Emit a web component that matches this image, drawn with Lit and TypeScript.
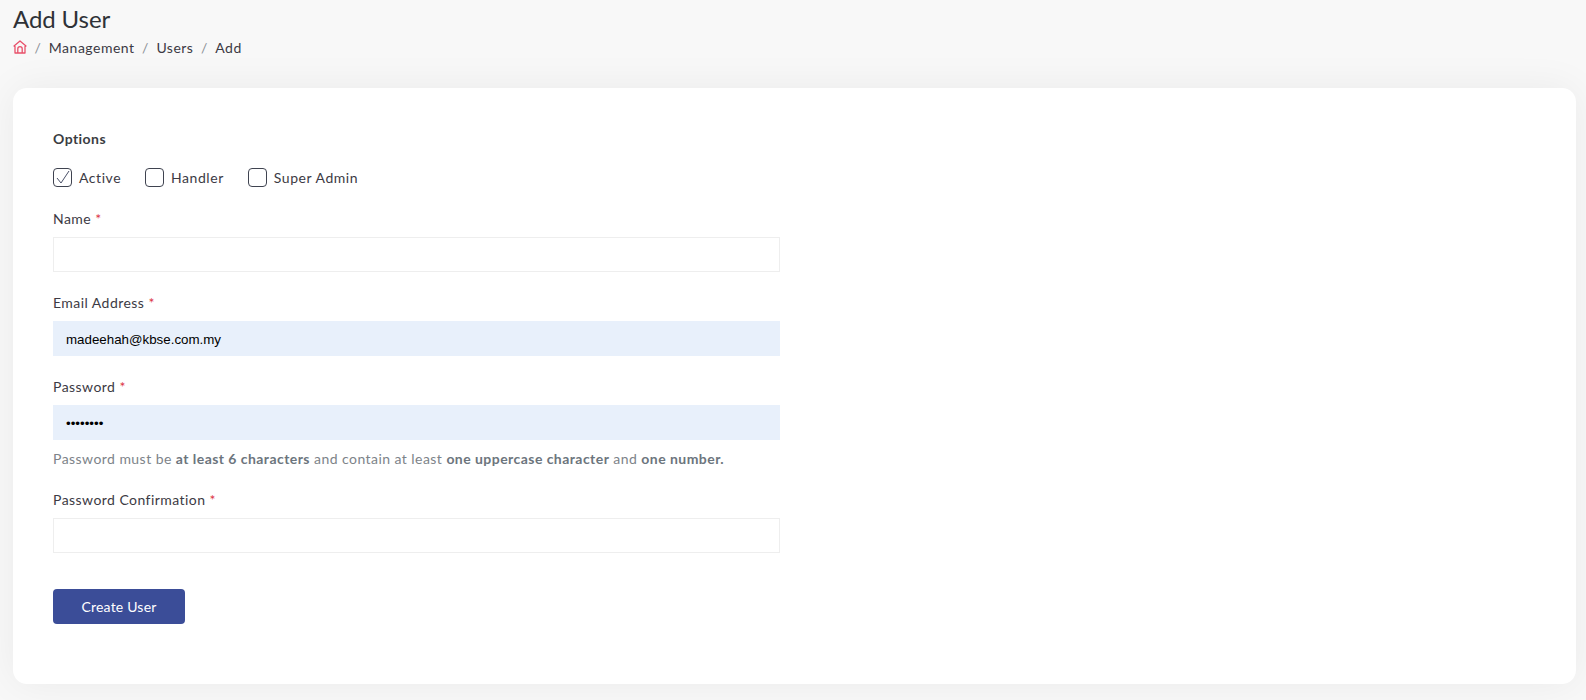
import { LitElement, html, css } from "lit";
import { customElement } from "lit/decorators.js";

@customElement("app-root")
export class AppRoot extends LitElement {
  static styles = css`
    :host {
      display: block;
      height: 700px;
      box-sizing: border-box;
      overflow: hidden;
      background: #f8f8f8;
      font-family: Lato, "Liberation Sans", sans-serif;
      color: #343a40;
      padding: 0 10px 0 13px;
    }
    h1 {
      margin: 0;
      padding-top: 4px;
      font-size: 24px;
      line-height: 30px;
      font-weight: 400;
      letter-spacing: -0.1px;
      color: #2f3237;
    }
    .crumbs {
      display: flex;
      align-items: center;
      height: 20px;
      margin-top: 3px;
      font-size: 14px;
      letter-spacing: 0.5px;
      color: #3c3a44;
    }
    .crumbs svg { width: 14px; height: 14px; display: block; }
    .sep { margin: 0 7.5px; color: #8a8f96; }
    .card {
      margin-top: 31px;
      height: 596px;
      box-sizing: border-box;
      background: #fff;
      border-radius: 14px;
      box-shadow: 0 0 40px rgba(0, 0, 0, 0.06);
      padding: 42px 40px;
    }
    .title {
      font-size: 14px;
      line-height: 18px;
      font-weight: 700;
      letter-spacing: 0.45px;
      color: #3a3d42;
    }
    .checks {
      display: flex;
      gap: 24px;
      margin-top: 19px;
      height: 20px;
      align-items: center;
    }
    .check {
      display: flex;
      align-items: center;
      gap: 7px;
      font-size: 14px;
      letter-spacing: 0.55px;
      color: #3c3a44;
    }
    .box {
      width: 19px;
      height: 19px;
      box-sizing: border-box;
      border: 1px solid #3f4350;
      border-radius: 4px;
      display: flex;
      align-items: center;
      justify-content: center;
    }
    .box svg { width: 17px; height: 17px; display: block; }
    .field { width: 727px; margin-top: 22px; }
    .field + .field { margin-top: 21px; }
    label {
      display: block;
      font-size: 14px;
      line-height: 20px;
      letter-spacing: 0.45px;
      color: #3c3a44;
      margin-bottom: 8px;
    }
    .req { color: #dc3545; }
    .input {
      height: 35px;
      box-sizing: border-box;
      border: 1px solid #eeeeee;
      background: #fff;
      padding: 1px 12px 0;
      display: flex;
      align-items: center;
      font-family: "Liberation Sans", Arial, sans-serif;
      font-size: 13.33px;
      color: #000;
    }
    .filled { background: #e8f0fb; border-color: #e8f0fb; }
    .dots { letter-spacing: 0; }
    .hint {
      margin-top: 9px;
      font-size: 14px;
      line-height: 20px;
      letter-spacing: 0.45px;
      color: #7d8389;
    }
    .hint b { font-weight: 700; color: #6c757d; }
    button {
      display: block;
      margin-top: 36px;
      width: 132px;
      height: 35px;
      border: 0;
      border-radius: 4px;
      background: #3b4d98;
      color: #fff;
      font-family: Lato, sans-serif;
      font-size: 14px;
      letter-spacing: 0.2px;
    }
  `;

  private field(name: string, value = "", hint = false, pass = false) {
    return html`<div class="field">
      <label>${name} <span class="req">*</span></label>
      <div class="input ${value ? "filled" : ""} ${pass ? "dots" : ""}">${value}</div>
      ${hint
        ? html`<div class="hint">
            Password must be <b>at least 6 characters</b> and contain at least
            <b>one uppercase character</b> and <b>one number.</b>
          </div>`
        : ""}
    </div>`;
  }

  render() {
    return html`
      <h1>Add User</h1>
      <div class="crumbs">
        <svg viewBox="0 0 14 14" fill="none" stroke="#e8506a" stroke-width="1.3" stroke-linejoin="round">
          <path d="M1 6 7 1l6 5-1 .6V13H2V6.6z" />
          <path d="M4.8 13V8.8a2.2 2.2 0 0 1 4.4 0V13" />
        </svg>
        <span class="sep">/</span><span>Management</span>
        <span class="sep">/</span><span>Users</span>
        <span class="sep">/</span><span>Add</span>
      </div>
      <div class="card">
        <div class="title">Options</div>
        <div class="checks">
          <div class="check">
            <span class="box">
              <svg viewBox="0 0 17 17" fill="none" stroke="#4a5068" stroke-width="1">
                <path d="M3 9l4 5L15 2" />
              </svg>
            </span>
            Active
          </div>
          <div class="check"><span class="box"></span>Handler</div>
          <div class="check"><span class="box"></span>Super Admin</div>
        </div>
        ${this.field("Name")}
        ${this.field("Email Address", "madeehah@kbse.com.my")}
        ${this.field("Password", "••••••••", true, true)}
        ${this.field("Password Confirmation")}
        <button>Create User</button>
      </div>
    `;
  }
}
